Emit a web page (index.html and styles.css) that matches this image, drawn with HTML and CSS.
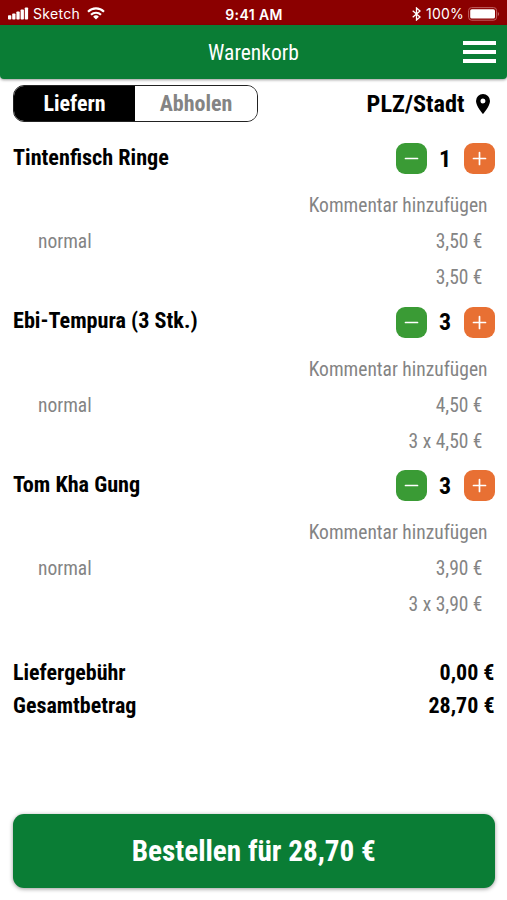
FILE: index.html
```
<!DOCTYPE html>
<html lang="de">
<head>
  <meta charset="UTF-8">
  <meta name="viewport" content="width=device-width, initial-scale=1.0">
  <title>Warenkorb</title>
  <link rel="stylesheet" href="styles.css">
</head>
<body>
  <div class="status-bar">
    <div class="status-left">
      <svg class="signal" width="21" height="13" viewBox="0 0 21 13" fill="#fff">
        <rect x="0" y="8.2" width="3.3" height="4.3" rx="0.8"/>
        <rect x="4.2" y="6.5" width="3.3" height="6" rx="0.8"/>
        <rect x="8.4" y="4.5" width="3.3" height="8" rx="0.8"/>
        <rect x="12.6" y="2.5" width="3.3" height="10" rx="0.8"/>
        <rect x="16.8" y="0.4" width="3.3" height="12.1" rx="0.8"/>
      </svg>
      <span class="carrier">Sketch</span>
      <svg class="wifi" width="18" height="13" viewBox="0 0 18 13" fill="none" stroke="#fff" stroke-width="2.1">
        <path d="M1 4.7a11.4 11.4 0 0 1 16 0"/>
        <path d="M4 7.8a7.1 7.1 0 0 1 10 0"/>
        <path d="M9 12.6 6.1 9.8a4.1 4.1 0 0 1 5.8 0z" fill="#fff" stroke="none"/>
      </svg>
    </div>
    <span class="time">9:41 AM</span>
    <div class="status-right">
      <svg class="bluetooth" width="9" height="14" viewBox="0 0 9 14" fill="none" stroke="#fff" stroke-width="1.3">
        <path d="M.7 3.8 8 10 4.5 13V1L8 4 .7 10.2"/>
      </svg>
      <span class="percent">100%</span>
      <svg class="battery" width="32" height="14" viewBox="0 0 32 14">
        <rect x="0.6" y="0.6" width="28" height="12.6" rx="3" fill="none" stroke="#c06060" stroke-width="1"/>
        <rect x="2.2" y="2.2" width="24.8" height="9.4" rx="1.6" fill="#fff"/>
        <path d="M29.8 5v4c1.7-.7 1.7-3.3 0-4z" fill="#c06060"/>
      </svg>
    </div>
  </div>

  <header class="header">
    <h1>Warenkorb</h1>
    <button class="menu" aria-label="Menü"><span></span><span></span><span></span></button>
  </header>

  <main class="content">
    <div class="options">
      <div class="toggle">
        <button class="toggle-item active">Liefern</button>
        <button class="toggle-item">Abholen</button>
      </div>
      <div class="location">
        <span>PLZ/Stadt</span>
        <svg width="14" height="20" viewBox="0 0 14 20">
          <path d="M7 0a7 7 0 0 0-7 7c0 5.2 7 13 7 13s7-7.8 7-13a7 7 0 0 0-7-7zm0 9.5a2.5 2.5 0 1 1 0-5 2.5 2.5 0 0 1 0 5z"/>
        </svg>
      </div>
    </div>

    <section class="item">
      <div class="item-head">
        <h2>Tintenfisch Ringe</h2>
        <div class="counter">
          <button class="minus" aria-label="Weniger"><svg width="15" height="15" viewBox="0 0 15 15"><path d="M1.5 7.5h12"/></svg></button>
          <span class="count">1</span>
          <button class="plus" aria-label="Mehr"><svg width="15" height="15" viewBox="0 0 15 15"><path d="M1.5 7.5h12M7.5 1.5v12"/></svg></button>
        </div>
      </div>
      <div class="comment">Kommentar hinzufügen</div>
      <div class="line"><span>normal</span><span>3,50 €</span></div>
      <div class="line sum"><span>3,50 €</span></div>
    </section>

    <section class="item">
      <div class="item-head">
        <h2>Ebi-Tempura (3 Stk.)</h2>
        <div class="counter">
          <button class="minus" aria-label="Weniger"><svg width="15" height="15" viewBox="0 0 15 15"><path d="M1.5 7.5h12"/></svg></button>
          <span class="count">3</span>
          <button class="plus" aria-label="Mehr"><svg width="15" height="15" viewBox="0 0 15 15"><path d="M1.5 7.5h12M7.5 1.5v12"/></svg></button>
        </div>
      </div>
      <div class="comment">Kommentar hinzufügen</div>
      <div class="line"><span>normal</span><span>4,50 €</span></div>
      <div class="line sum"><span>3 x 4,50 €</span></div>
    </section>

    <section class="item">
      <div class="item-head">
        <h2>Tom Kha Gung</h2>
        <div class="counter">
          <button class="minus" aria-label="Weniger"><svg width="15" height="15" viewBox="0 0 15 15"><path d="M1.5 7.5h12"/></svg></button>
          <span class="count">3</span>
          <button class="plus" aria-label="Mehr"><svg width="15" height="15" viewBox="0 0 15 15"><path d="M1.5 7.5h12M7.5 1.5v12"/></svg></button>
        </div>
      </div>
      <div class="comment">Kommentar hinzufügen</div>
      <div class="line"><span>normal</span><span>3,90 €</span></div>
      <div class="line sum"><span>3 x 3,90 €</span></div>
    </section>

    <div class="totals">
      <div class="total-row"><span>Liefergebühr</span><span>0,00 €</span></div>
      <div class="total-row"><span>Gesamtbetrag</span><span>28,70 €</span></div>
    </div>

    <button class="order">Bestellen für 28,70 €</button>
  </main>
</body>
</html>
```

FILE: styles.css
```
* {
  box-sizing: border-box;
  margin: 0;
  padding: 0;
}

body {
  display: flex;
  flex-direction: column;
  height: 100vh;
  overflow: hidden;
  background: #fff;
  color: #000;
  font-family: "Roboto Condensed", Roboto, sans-serif;
  font-stretch: 75%;
}

button {
  border: none;
  font: inherit;
  cursor: pointer;
}

.status-bar {
  display: grid;
  grid-template-columns: 1fr auto 1fr;
  align-items: center;
  height: 25px;
  padding: 2px 7px 0 8px;
  background: #8b0000;
  color: #fff;
  font-family: Inter, sans-serif;
  font-stretch: normal;
  font-size: 14px;
}

.status-left,
.status-right {
  display: flex;
  align-items: center;
}

.status-right {
  justify-content: flex-end;
}

.carrier {
  margin: 0 7px 0 4px;
  letter-spacing: 0.3px;
}

.time {
  padding-top: 1px;
  font-weight: 600;
  font-size: 14px;
  letter-spacing: 0.4px;
}

.percent {
  margin: 0 4px 0 5px;
  letter-spacing: 0.2px;
}

.header {
  display: grid;
  grid-template-columns: 1fr auto 1fr;
  align-items: center;
  height: 54px;
  padding: 0 11px;
  background: #0a7d35;
  color: #fff;
  border-radius: 0 0 4px 4px;
  box-shadow: 0 1px 3px rgba(0, 0, 0, 0.4);
}

.header h1 {
  grid-column: 2;
  font-size: 21.5px;
  font-weight: 400;
}

.menu {
  display: flex;
  flex-direction: column;
  justify-self: end;
  gap: 5px;
  width: 33px;
  background: none;
}

.menu span {
  height: 4px;
  background: #fff;
}

.content {
  display: flex;
  flex: 1;
  flex-direction: column;
  padding: 6px 12.5px 12px 13px;
}

.options {
  display: flex;
  justify-content: space-between;
  align-items: center;
  height: 37px;
}

.toggle {
  display: flex;
  width: 245px;
  height: 37px;
  border: 1px solid #222;
  border-radius: 11px;
  overflow: hidden;
}

.toggle-item {
  flex: 1;
  background: #fff;
  color: #848484;
  font-size: 22px;
  font-weight: 700;
}

.toggle-item.active {
  flex: 0 0 121px;
  background: #000;
  color: #fff;
}

.location {
  display: flex;
  align-items: center;
  gap: 11px;
  padding-right: 5px;
  font-size: 24.3px;
  font-weight: 700;
}

.item {
  height: 163.7px;
}

.item:first-of-type {
  margin-top: 19px;
}

.item-head {
  display: flex;
  justify-content: space-between;
  align-items: center;
  height: 35px;
}

.item-head h2 {
  padding-bottom: 4px;
  font-size: 22.2px;
  font-weight: 700;
}

.counter {
  display: flex;
  align-items: center;
}

.counter button {
  display: flex;
  justify-content: center;
  align-items: center;
  width: 31px;
  height: 31px;
  border-radius: 9px;
}

.counter svg {
  fill: none;
  stroke: #fff;
  stroke-width: 1.7;
  stroke-linecap: round;
}

.minus {
  background: #3a9b35;
}

.plus {
  background: #e87033;
}

.count {
  width: 37px;
  text-align: center;
  font-size: 24px;
  font-weight: 700;
}

.comment,
.line {
  color: #848484;
  font-size: 19.5px;
  line-height: 36px;
}

.comment {
  margin-top: 12px;
  padding-right: 7px;
  text-align: right;
}

.line {
  display: flex;
  justify-content: space-between;
  padding: 0 12px 0 25px;
}

.line.sum {
  justify-content: flex-end;
}

.totals {
  margin-top: 24px;
}

.total-row {
  display: flex;
  justify-content: space-between;
  font-size: 22px;
  font-weight: 700;
  line-height: 33px;
}

.order {
  height: 74px;
  margin-top: auto;
  border-radius: 11px;
  background: #0a7d35;
  color: #fff;
  font-size: 29.2px;
  font-weight: 700;
  box-shadow: 0 1px 4px rgba(0, 0, 0, 0.4);
}
```
